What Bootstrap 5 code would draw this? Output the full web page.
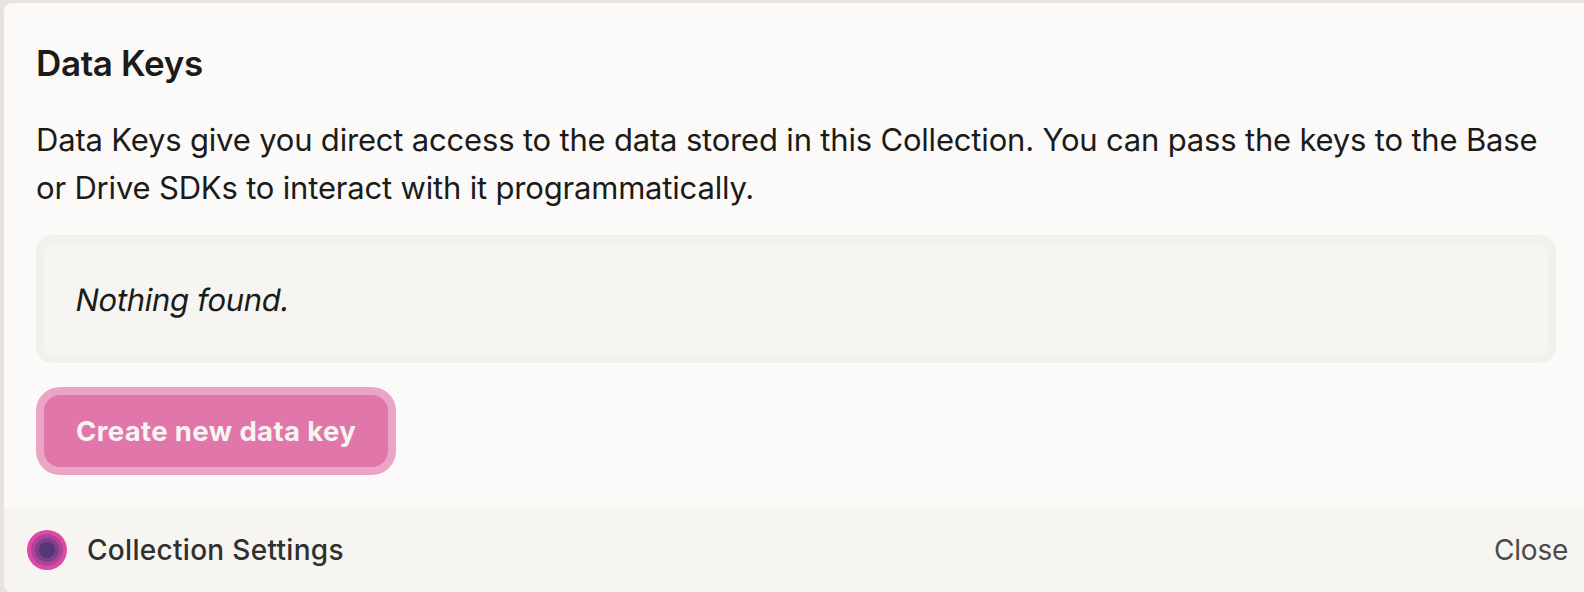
<!DOCTYPE html>
<html lang="en">
<head>
<meta charset="utf-8">
<title>Collection Settings</title>
<link href="https://cdn.jsdelivr.net/npm/bootstrap@5.3.0/dist/css/bootstrap.min.css" rel="stylesheet">
<style>
html,body{height:100%;overflow:hidden}
body{background:#e7e4df;font-family:Inter,"Liberation Sans",sans-serif;color:#1b1b1a;padding:3px 0 0 4px;font-size:31px;line-height:48px;letter-spacing:-.185px}
.panel{height:589px;background:#fbfaf8;border-radius:8px 0 0 8px}
.panel-main{padding:36px 28px 0 32px;height:504px}
.panel-title{font-size:35px;line-height:48px;font-weight:600;letter-spacing:-.35px;margin-bottom:29px}
.empty-box{height:128px;border:8px solid #f1f0ec;border-radius:16px;background:#f6f5f1;padding:33px 32px 31px;margin:23px 0 24px}
.slanted{display:inline-block;transform:skewX(-10deg);letter-spacing:-.3px}
.btn-create{--bs-btn-color:#f7f4f1;--bs-btn-bg:#e176aa;--bs-btn-hover-color:#f7f4f1;--bs-btn-hover-bg:#dc6ca2;height:88px;width:360px;border:8px solid #eaa5c6!important;border-radius:24px;font-size:27.5px;font-weight:700;letter-spacing:.38px;padding:1px 32px 0}
.panel-foot{height:85px;background:#f6f5f1;padding:0 16px 0 23px;font-size:28px;border-bottom-left-radius:8px}
.foot-title{font-weight:500;color:#30302f;margin-left:20px;letter-spacing:.3px}
.foot-close{color:#4a4a48;letter-spacing:-.25px}
</style>
<script src="https://cdn.jsdelivr.net/npm/bootstrap@5.3.0/dist/js/bootstrap.bundle.min.js"></script>
</head>
<body>
<section class="panel overflow-hidden">
  <div class="panel-main">
    <h1 class="panel-title">Data Keys</h1>
    <p class="m-0">Data Keys give you direct access to the data stored in this Collection. You can pass the keys to the Base<br>or Drive SDKs to interact with it programmatically.</p>
    <div class="empty-box"><span class="slanted">Nothing found.</span></div>
    <button type="button" class="btn btn-create text-start text-nowrap">Create new data key</button>
  </div>
  <footer class="panel-foot d-flex align-items-center">
    <svg width="40" height="40" viewBox="0 0 40 40" aria-hidden="true"><circle cx="20" cy="20" r="20" fill="#df49a6"/><circle cx="20" cy="20" r="16" fill="#ad4499"/><circle cx="20" cy="20" r="12" fill="#813f89"/><circle cx="20" cy="20" r="8" fill="#533778"/></svg>
    <span class="foot-title">Collection Settings</span>
    <span class="foot-close ms-auto">Close</span>
  </footer>
</section>
</body>
</html>
